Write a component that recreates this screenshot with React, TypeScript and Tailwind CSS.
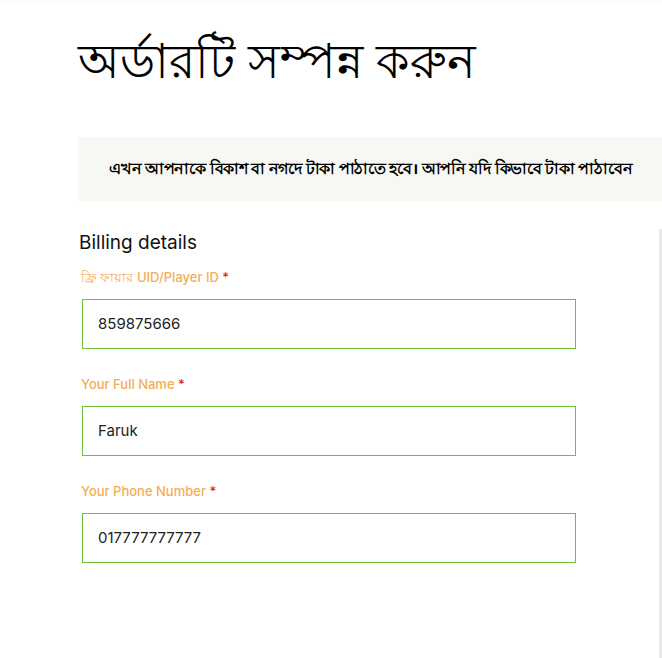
import React from "react";

const Field = ({ label, value }: { label: string; value: string }) => (
  <div className="flex flex-col">
    <label className="text-[13px] leading-[18px] text-[#f5ad55] pl-[3px] font-medium" style={{ fontFamily: "Inter, 'Noto Sans', sans-serif" }}>
      {label} <span className="text-[#e2231a]">*</span>
    </label>
    <div className="mt-[13px] ml-[4px] w-[494px] h-[50px] border border-[#6ec23a] flex items-center pl-[15px] text-[15px] text-[#222]">
      {value}
    </div>
  </div>
);

export default function App() {
  return (
    <div className="w-[662px] h-[658px] overflow-hidden bg-white relative" style={{ fontFamily: "Inter, 'Noto Sans', sans-serif" }}>
      <div className="h-[4px] bg-[#fbfbfb]" />
      <div className="pl-[78px]">
        <h1 className="text-[48px] leading-[70px] mt-[22px] text-black font-medium whitespace-nowrap">
          অর্ডারটি সম্পন্ন করুন
        </h1>
        <div className="mt-[41px] h-[64px] bg-[#f7f8f4] flex items-center pl-[31px] whitespace-nowrap overflow-hidden">
          <span className="text-[15.5px] font-bold text-black tracking-[-0.2px]">
            এখন আপনাকে বিকাশ বা নগদে টাকা পাঠাতে হবে। আপনি যদি কিভাবে টাকা পাঠাবেন
          </span>
        </div>
        <div className="flex mt-[28px]">
          <div className="w-[581px]">
            <h3 className="text-[19px] leading-[24px] text-[#111] pl-[1px] mt-[2px]">Billing details</h3>
            <div className="mt-[13px] flex flex-col gap-[26px]">
              <Field label="ফ্রি ফায়ার UID/Player ID" value="859875666" />
              <Field label="Your Full Name" value="Faruk" />
              <Field label="Your Phone Number" value="017777777777" />
            </div>
          </div>
          <div className="w-[3px] h-[440px] bg-[#e9e9e9]" />
        </div>
      </div>
    </div>
  );
}
